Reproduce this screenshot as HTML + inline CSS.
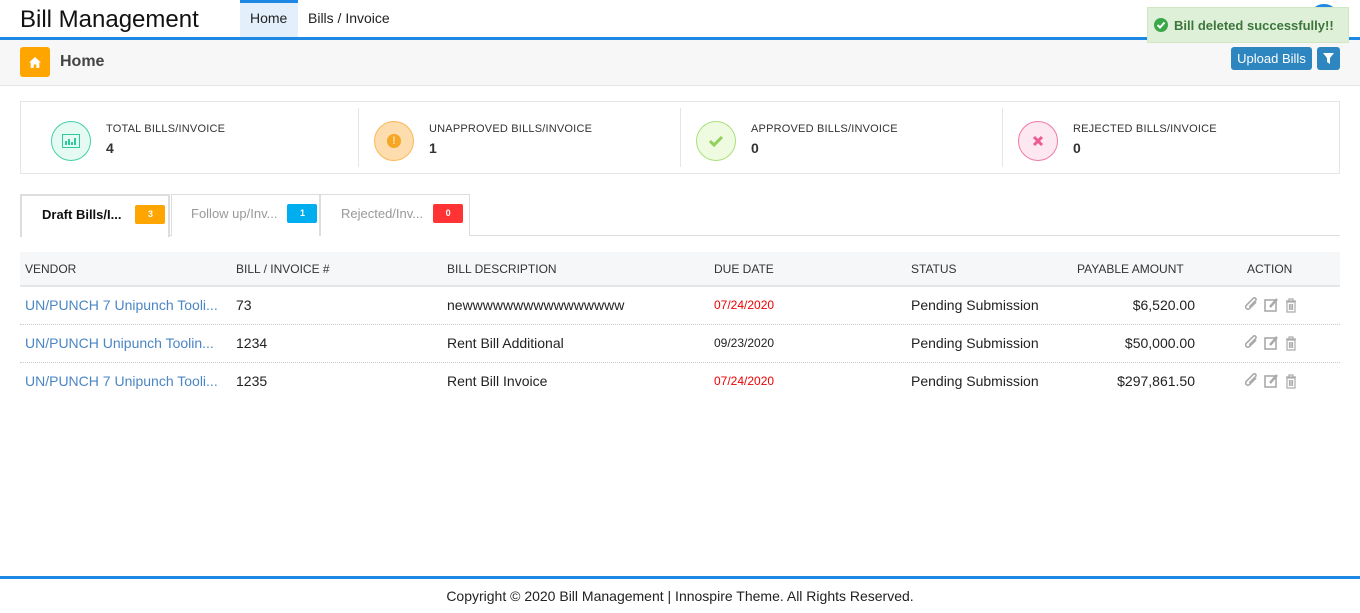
<!DOCTYPE html>
<html><head><meta charset="utf-8"><style>
*{box-sizing:border-box;margin:0;padding:0}
body{width:1360px;height:613px;position:relative;background:#fff;font-family:"Liberation Sans",Arial,sans-serif;color:#222;overflow:hidden}
.abs{position:absolute}
.stat .lbl{font-size:11px;color:#333;letter-spacing:.2px}
.stat .num{font-size:14px;font-weight:bold;color:#333;margin-top:5px}
.circ{position:absolute;width:40px;height:40px;border-radius:50%;display:flex;align-items:center;justify-content:center}
.tab{position:absolute;top:194px;height:42px;border:1px solid #ddd;border-bottom:none;background:#fff;font-size:13px;color:#999;display:flex;align-items:center;padding-bottom:4px}
.badge{display:inline-block;color:#fff;font-size:9px;font-weight:bold;width:30px;height:19px;line-height:19px;text-align:center;border-radius:2px}
.hd{font-size:12px;color:#333}
.row{position:absolute;left:20px;width:1320px;height:38px;border-bottom:1px dotted #ccc}
.row span{position:absolute;top:10px;font-size:14px}
</style></head><body>
<div class="abs" style="left:20px;top:6px;font-size:24px;color:#111">Bill Management</div>
<div class="abs" style="left:240px;top:0;width:58px;height:37px;background:#e3effb;border-top:3px solid #1e88e5"></div>
<div class="abs" style="left:250px;top:10px;font-size:14px">Home</div>
<div class="abs" style="left:308px;top:10px;font-size:14px">Bills / Invoice</div>
<div class="abs" style="left:1308px;top:4px;width:32px;height:32px;border-radius:50%;background:#1e88e5"></div>
<div class="abs" style="left:0;top:37px;width:1360px;height:3px;background:#1e88e5"></div>
<div class="abs" style="left:0;top:40px;width:1360px;height:46px;background:#f7f7f7;border-bottom:1px solid #e5e5e5"></div>
<div class="abs" style="left:20px;top:47px;width:30px;height:30px;background:#ffa500;border-radius:3px;display:flex;align-items:center;justify-content:center"><svg width="12" height="11" viewBox="0 0 12 11"><path d="M6 0L0 5.5h1.7V11h3V7.5h2.6V11h3V5.5H12z" fill="#fff"/></svg></div>
<div class="abs" style="left:60px;top:53px;font-size:16px;font-weight:bold;color:#444">Home</div>
<div class="abs" style="left:1231px;top:47px;width:81px;height:23px;background:#2e86c1;border-radius:3px;color:#fff;font-size:13px;text-align:center;line-height:23px">Upload Bills</div>
<div class="abs" style="left:1317px;top:47px;width:23px;height:23px;background:#2e86c1;border-radius:3px;display:flex;align-items:center;justify-content:center"><svg width="11" height="11" viewBox="0 0 11 11"><path d="M0 0h11L7 5v6L4 9V5z" fill="#fff"/></svg></div>
<div class="abs" style="left:1147px;top:7px;width:202px;height:36px;background:#dff0d8;border:1px solid #d0e6c4;color:#3c763d;font-size:13px;font-weight:bold;display:flex;align-items:center;padding-left:6px"><span style="display:inline-block;width:14px;height:14px;border-radius:50%;background:#3aa84a;margin-right:6px;position:relative"><svg width="14" height="14" viewBox="0 0 14 14" style="position:absolute;left:0;top:0"><path d="M3.5 7l2.5 2.5 4.5-5" stroke="#fff" stroke-width="2" fill="none"/></svg></span>Bill deleted successfully!!</div>
<div class="abs" style="left:20px;top:101px;width:1320px;height:73px;border:1px solid #e5e5e5"></div>
<div class="abs" style="left:358px;top:108px;width:1px;height:59px;background:#e5e5e5"></div>
<div class="abs" style="left:680px;top:108px;width:1px;height:59px;background:#e5e5e5"></div>
<div class="abs" style="left:1002px;top:108px;width:1px;height:59px;background:#e5e5e5"></div>
<div class="circ" style="left:51px;top:121px;background:#e6faf4;border:1px solid #3fd1a7"><svg width="18" height="14"><rect x=".5" y=".5" width="17" height="13" fill="none" stroke="#2ec99b"/><path d="M4 11V7M7 11V5M10 11V8M13 11V4" stroke="#2ec99b" stroke-width="2"/></svg></div>
<div class="abs stat" style="left:106px;top:123px"><div class="lbl">TOTAL BILLS/INVOICE</div><div class="num">4</div></div>
<div class="circ" style="left:374px;top:121px;background:#fddcae;border:1px solid #f9b85a"><div style="width:14px;height:14px;border-radius:50%;background:#f5a623;color:#fddcae;font-size:11px;font-weight:bold;text-align:center;line-height:14px">!</div></div>
<div class="abs stat" style="left:429px;top:123px"><div class="lbl">UNAPPROVED BILLS/INVOICE</div><div class="num">1</div></div>
<div class="circ" style="left:696px;top:121px;background:#eefbe0;border:1px solid #a8e07a"><svg width="16" height="12"><path d="M2 6l4 4 8-8" stroke="#8fd15c" stroke-width="3" fill="none"/></svg></div>
<div class="abs stat" style="left:751px;top:123px"><div class="lbl">APPROVED BILLS/INVOICE</div><div class="num">0</div></div>
<div class="circ" style="left:1018px;top:121px;background:#fde8f1;border:1px solid #f07aa5"><svg width="12" height="12"><path d="M2 2l8 8M10 2l-8 8" stroke="#ec5b93" stroke-width="3"/></svg></div>
<div class="abs stat" style="left:1073px;top:123px"><div class="lbl">REJECTED BILLS/INVOICE</div><div class="num">0</div></div>
<div class="abs" style="left:20px;top:235px;width:1320px;height:1px;background:#ddd"></div>
<div class="tab" style="left:20px;width:150px;border:2px solid #ddd;border-bottom:none;height:43px;color:#111;font-weight:bold;padding-left:20px">Draft Bills/I...<span class="badge" style="background:#ffa500;margin-left:14px">3</span></div>
<div class="tab" style="left:171px;width:149px;padding-left:19px">Follow up/Inv...<span class="badge" style="background:#00aeef;margin-left:10px">1</span></div>
<div class="tab" style="left:320px;width:150px;padding-left:20px">Rejected/Inv...<span class="badge" style="background:#f33;margin-left:10px">0</span></div>
<div class="abs" style="left:20px;top:252px;width:1320px;height:35px;background:#f6f7f9;border-bottom:2px solid #e3e5e8"></div>
<div class="abs hd" style="left:25px;top:262px">VENDOR</div>
<div class="abs hd" style="left:236px;top:262px">BILL / INVOICE #</div>
<div class="abs hd" style="left:447px;top:262px">BILL DESCRIPTION</div>
<div class="abs hd" style="left:714px;top:262px">DUE DATE</div>
<div class="abs hd" style="left:911px;top:262px">STATUS</div>
<div class="abs hd" style="left:1077px;top:262px">PAYABLE AMOUNT</div>
<div class="abs hd" style="left:1247px;top:262px">ACTION</div>
<div class="row" style="top:287px"><span style="left:5px;color:#4a86c5">UN/PUNCH 7 Unipunch Tooli...</span><span style="left:216px">73</span><span style="left:427px">newwwwwwwwwwwwwwww</span><span style="left:694px;font-size:12px;top:11px;color:#e00">07/24/2020</span><span style="left:891px">Pending Submission</span><span style="right:145px">$6,520.00</span></div>
<div class="row" style="top:325px"><span style="left:5px;color:#4a86c5">UN/PUNCH Unipunch Toolin...</span><span style="left:216px">1234</span><span style="left:427px">Rent Bill Additional</span><span style="left:694px;font-size:12px;top:11px">09/23/2020</span><span style="left:891px">Pending Submission</span><span style="right:145px">$50,000.00</span></div>
<div class="row" style="top:363px;border-bottom:none"><span style="left:5px;color:#4a86c5">UN/PUNCH 7 Unipunch Tooli...</span><span style="left:216px">1235</span><span style="left:427px">Rent Bill Invoice</span><span style="left:694px;font-size:12px;top:11px;color:#e00">07/24/2020</span><span style="left:891px">Pending Submission</span><span style="right:145px">$297,861.50</span></div>
<svg class="abs" style="left:1244px;top:297px" width="60" height="100">
<g id="ic" stroke="#aaa" fill="none" stroke-width="1.6">
<path d="M12 5L5.5 11.5a2.2 2.2 0 0 1-3.2-3.2l7-7a1.6 1.6 0 0 1 2.3 2.3l-6.3 6.3"/>
<rect x="21" y="3" width="11" height="11"/><path d="M26 10l7-8" stroke-width="2.5"/>
<path d="M42 4h10M45 4V2h4v2M43 5h8v10h-8z M45.5 7v6M47 7v6M48.5 7v6" stroke-width="1.2"/>
</g>
<use href="#ic" y="38"/><use href="#ic" y="76"/>
</svg>
<div class="abs" style="left:0;top:576px;width:1360px;height:3px;background:#1e88e5"></div>
<div class="abs" style="left:0;top:588px;width:1360px;text-align:center;font-size:14px;color:#222">Copyright © 2020 Bill Management | Innospire Theme. All Rights Reserved.</div>
</body></html>
